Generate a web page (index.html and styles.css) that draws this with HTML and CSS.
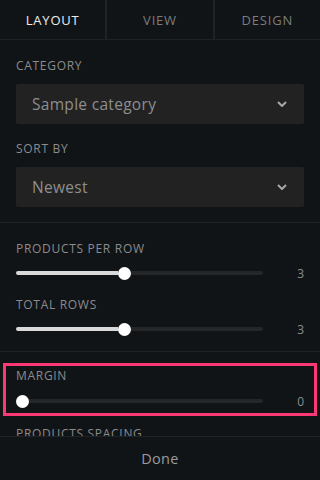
FILE: index.html
```html
<!DOCTYPE html>
<html>
<head>
<meta charset="utf-8">
<link rel="stylesheet" href="styles.css">
</head>
<body>
<div class="app">
  <nav class="tabs">
    <div class="tab active">LAYOUT</div>
    <div class="tab">VIEW</div>
    <div class="tab">DESIGN</div>
  </nav>
  <main class="content">
    <section class="group selects">
      <div class="label">CATEGORY</div>
      <div class="select">
        <span>Sample category</span>
        <svg class="chev" width="10" height="6" viewBox="0 0 10 6"><path d="M1 1l4 4 4-4" fill="none" stroke="#a8a8a8" stroke-width="2"/></svg>
      </div>
      <div class="label second">SORT BY</div>
      <div class="select">
        <span>Newest</span>
        <svg class="chev" width="10" height="6" viewBox="0 0 10 6"><path d="M1 1l4 4 4-4" fill="none" stroke="#a8a8a8" stroke-width="2"/></svg>
      </div>
    </section>
    <section class="group sliders">
      <div class="label">PRODUCTS PER ROW</div>
      <div class="slider-row">
        <div class="track"><div class="fill" style="width:102px"></div><div class="thumb"></div><div class="rest"></div></div>
        <span class="val">3</span>
      </div>
      <div class="label second">TOTAL ROWS</div>
      <div class="slider-row">
        <div class="track"><div class="fill" style="width:102px"></div><div class="thumb"></div><div class="rest"></div></div>
        <span class="val">3</span>
      </div>
    </section>
    <section class="highlight">
      <div class="label">MARGIN</div>
      <div class="slider-row">
        <div class="track"><div class="fill" style="width:0px"></div><div class="thumb"></div><div class="rest"></div></div>
        <span class="val">0</span>
      </div>
    </section>
    <section class="group cut">
      <div class="label">PRODUCTS SPACING</div>
    </section>
  </main>
  <footer class="footer">Done</footer>
</div>
</body>
</html>
```
FILE: styles.css
```css
* { box-sizing: border-box; }
html, body { margin: 0; padding: 0; }
body {
  background: #111417;
  font-family: "Open Sans", "Noto Sans", sans-serif;
  color: #8c8c8c;
}
.app {
  height: 480px;
  display: flex;
  flex-direction: column;
  overflow: hidden;
}
.tabs {
  display: flex;
  height: 40px;
  border-bottom: 1px solid #1f2226;
  flex: none;
}
.tab {
  flex: 1;
  display: flex;
  align-items: center;
  justify-content: center;
  font-size: 13px;
  font-weight: 400;
  letter-spacing: 0.8px;
  color: #7a7c7e;
}
.tab + .tab { border-left: 2px solid #1f2226; }
.tab.active { color: #ededed; }
.content {
  flex: 1;
  overflow: hidden;
}
.group {
  padding: 0 16px;
}
.selects {
  padding-top: 18px;
  padding-bottom: 15px;
  border-bottom: 1px solid #1f2226;
}
.label {
  font-size: 12px;
  line-height: 16px;
  height: 16px;
  letter-spacing: 0.7px;
  color: #8a8b8c;
  font-weight: 500;
}
.selects .label { margin-bottom: 10px; }
.selects .label.second { margin-top: 17px; }
.select {
  height: 40px;
  background: #222222;
  border-radius: 2px;
  display: flex;
  align-items: center;
  justify-content: space-between;
  padding: 0 16px;
  font-size: 15.5px;
  letter-spacing: 0.3px;
  color: #8e8e8e;
}
.chev { margin-right: 1px; }
.sliders {
  padding-top: 18px;
  padding-bottom: 12px;
  border-bottom: 1px solid #1f2226;
}
.sliders .label { margin-bottom: 6px; }
.sliders .label.second { margin-top: 14px; }
.slider-row {
  height: 20px;
  display: flex;
  align-items: center;
}
.track {
  width: 247px;
  display: flex;
  align-items: center;
}
.fill {
  height: 4px;
  background: #d9d9d9;
  border-radius: 2px 0 0 2px;
}
.rest {
  flex: 1;
  height: 4px;
  background: #252627;
  border-radius: 0 2px 2px 0;
}
.thumb {
  width: 13px;
  height: 13px;
  border-radius: 50%;
  background: #ffffff;
  flex: none;
}
.val {
  flex: 1;
  text-align: right;
  font-size: 12px;
  color: #8c8c8c;
}
.highlight {
  margin: 11px 3px 0;
  border: 3px solid #fe3874;
  padding: 2px 10px 2px 10px;
}
.highlight .label { margin-bottom: 7px; }
.cut { padding-top: 10px; }
.footer {
  flex: none;
  height: 44px;
  border-top: 1px solid #1f2226;
  background: #111417;
  display: flex;
  align-items: center;
  justify-content: center;
  font-size: 14.5px;
  color: #9a9a9a;
  letter-spacing: 0.3px;
}
```
